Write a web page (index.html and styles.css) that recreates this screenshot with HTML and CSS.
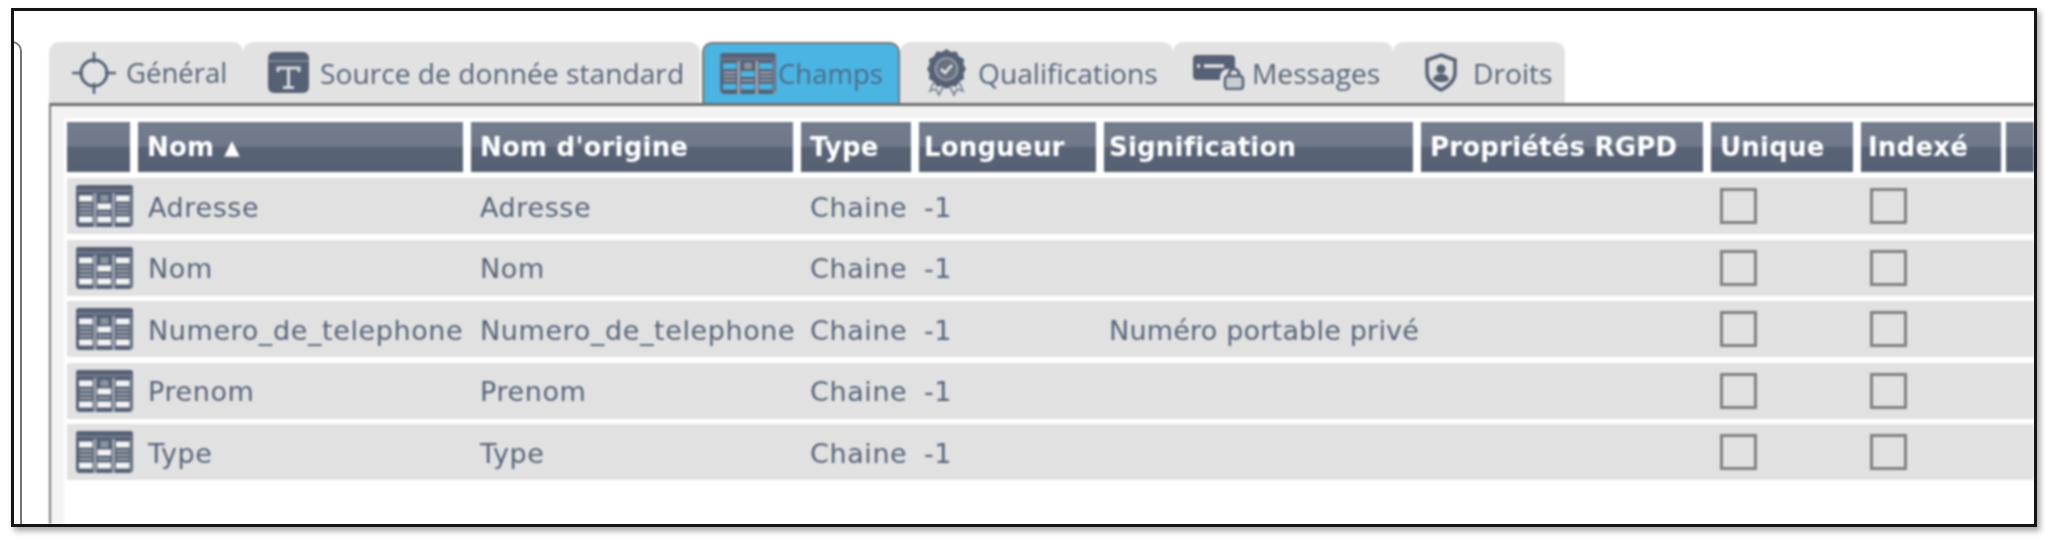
FILE: index.html
```html
<!DOCTYPE html>
<html lang="fr">
<head>
<meta charset="utf-8">
<title>Champs</title>
<link rel="stylesheet" href="styles.css">
</head>
<body>
<svg class="defs" width="0" height="0" aria-hidden="true">
  <symbol id="i-table" viewBox="0 0 57 42">
    <rect width="57" height="42" rx="3" fill="#9ca3af"/>
    <path d="M3 0h51a3 3 0 0 1 3 3v5H0V3a3 3 0 0 1 3-3z" fill="#566175"/>
    <path d="M0 5h57v1H0z" fill="#8b93a1"/>
    <path d="M0 8h2.500v33H3a3 3 0 0 1-3-3zM57 8h-1.500v33H54a3 3 0 0 0 3-3z" fill="#566175"/>
    <rect x="2" y="8" width="15.500" height="34" fill="#566175"/>
    <rect x="20.500" y="8" width="15.500" height="34" fill="#566175"/>
    <rect x="39" y="8" width="15.500" height="34" fill="#566175"/>
    <rect x="3" y="10.500" width="13.500" height="6" fill="currentColor"/>
    <rect x="40" y="10.500" width="13.500" height="6" fill="currentColor"/>
    <rect x="21.500" y="18.500" width="13.500" height="6" fill="currentColor"/>
    <rect x="3" y="31.500" width="13.500" height="6" fill="currentColor"/>
    <rect x="21.500" y="31.500" width="13.500" height="6" fill="currentColor"/>
    <rect x="40" y="31.500" width="13.500" height="6" fill="currentColor"/>
    <path d="M3.500 20h12.500M3.500 24h12.500M3.500 28h12.500M40.500 20h12.500M40.500 24h12.500M40.500 28h12.500M22 28h12.500" stroke="#b4b9c2" stroke-width="1.400"/>
    <rect x="24.500" y="10" width="8" height="6.500" fill="#8b93a1"/>
  </symbol>
</svg>
<div class="frame">
  <div class="side"></div>
  <div class="main">
    <div class="tabs">
      <div class="tab tab-general">
        <svg class="ic ic-cross" viewBox="0 0 44 42"><circle cx="22" cy="21" r="13" fill="none" stroke="#556074" stroke-width="3"/><path d="M22 0v11M22 31v11M0 21h11M33 21h11" stroke="#556074" stroke-width="2.500"/></svg>
        <span>Général</span>
      </div>
      <div class="tab tab-source">
        <svg class="ic ic-t" viewBox="0 0 41 41"><rect width="41" height="41" rx="6" fill="#566175"/><path d="M0 9h41" stroke="#8b93a1" stroke-width="1.500"/><path d="M10 20v-4h21v4M20.500 16v19M15 35.500h11" fill="none" stroke="#d5d8dd" stroke-width="3"/></svg>
        <span>Source de donnée standard</span>
      </div>
      <div class="tab tab-champs">
        <svg class="ic ic-tbl-tab"><use href="#i-table"/></svg>
        <span>Champs</span>
      </div>
      <div class="tab tab-qual">
        <svg class="ic ic-rosette" viewBox="0 0 39 48"><path d="M10 26 3 42l6-2 3 6 6-12M29 26l7 16-6-2-3 6-6-12" fill="none" stroke="#7d8694" stroke-width="1.800"/><path d="M19.500 0l4.500 3 5.500-.5 2.500 5 5 2.500-.5 5.500 2.500 4.500-2.500 4.500.5 5.500-5 2.500-2.500 5-5.500-.5-4.500 3-4.500-3-5.500.5-2.500-5-5-2.500.5-5.500L0 20l2.500-4.500L2 10l5-2.500L9.500 2.500 15 3z" fill="#566175"/><circle cx="19.500" cy="20" r="11" fill="#69727f" stroke="#a3a9b3" stroke-width="1.500"/><path d="M14 20l4 4 7-8" fill="none" stroke="#eceded" stroke-width="2.500"/></svg>
        <span>Qualifications</span>
      </div>
      <div class="tab tab-msg">
        <svg class="ic ic-msg" viewBox="0 0 52 35"><path d="M4 0h34a4 4 0 0 1 4 4v10h-8a8 8 0 0 0-7 8v3H4a4 4 0 0 1-4-4V4a4 4 0 0 1 4-4z" fill="#566175"/><path d="M4 11h3M11 11h20" stroke="#e3e3e3" stroke-width="3.500"/><path d="M36 22v-3a5 5 0 0 1 10 0v3" fill="none" stroke="#566175" stroke-width="3"/><rect x="32" y="21" width="18" height="13" rx="3" fill="#c9ccd1" stroke="#566175" stroke-width="2.500"/></svg>
        <span>Messages</span>
      </div>
      <div class="tab tab-droits">
        <svg class="ic ic-shield" viewBox="0 0 34 39"><path d="M17 2 31 7v13c0 8-6 13-14 17C9 33 3 28 3 20V7z" fill="none" stroke="#566175" stroke-width="3.500"/><circle cx="17" cy="16" r="4.500" fill="#566175"/><path d="M9 27c1-5 4-6 8-6s7 1 8 6c-4 3-12 3-16 0z" fill="#566175"/></svg>
        <span>Droits</span>
      </div>
    </div>
    <div class="panel">
      <div class="inner">
        <div class="grid head">
          <div class="th"></div>
          <div class="th pad">Nom <span class="sort">▲</span></div>
          <div class="th pad">Nom d'origine</div>
          <div class="th pad">Type</div>
          <div class="th pad-s">Longueur</div>
          <div class="th pad-s">Signification</div>
          <div class="th pad">Propriétés RGPD</div>
          <div class="th pad">Unique</div>
          <div class="th pad-m">Indexé</div>
          <div class="th last"></div>
        </div>
        <div class="grid row">
          <div class="td-ic"><svg class="ic ic-tbl"><use href="#i-table"/></svg></div>
          <div class="td pad">Adresse</div>
          <div class="td pad">Adresse</div>
          <div class="td pad">Chaine</div>
          <div class="td pad-s">-1</div>
          <div class="td pad-s"></div>
          <div class="td"></div>
          <div class="td pad"><span class="check"></span></div>
          <div class="td pad"><span class="check"></span></div>
          <div class="td"></div>
        </div>
        <div class="grid row">
          <div class="td-ic"><svg class="ic ic-tbl"><use href="#i-table"/></svg></div>
          <div class="td pad">Nom</div>
          <div class="td pad">Nom</div>
          <div class="td pad">Chaine</div>
          <div class="td pad-s">-1</div>
          <div class="td pad-s"></div>
          <div class="td"></div>
          <div class="td pad"><span class="check"></span></div>
          <div class="td pad"><span class="check"></span></div>
          <div class="td"></div>
        </div>
        <div class="grid row">
          <div class="td-ic"><svg class="ic ic-tbl"><use href="#i-table"/></svg></div>
          <div class="td pad">Numero_de_telephone</div>
          <div class="td pad">Numero_de_telephone</div>
          <div class="td pad">Chaine</div>
          <div class="td pad-s">-1</div>
          <div class="td pad-s tight">Numéro portable privé</div>
          <div class="td"></div>
          <div class="td pad"><span class="check"></span></div>
          <div class="td pad"><span class="check"></span></div>
          <div class="td"></div>
        </div>
        <div class="grid row">
          <div class="td-ic"><svg class="ic ic-tbl"><use href="#i-table"/></svg></div>
          <div class="td pad">Prenom</div>
          <div class="td pad">Prenom</div>
          <div class="td pad">Chaine</div>
          <div class="td pad-s">-1</div>
          <div class="td pad-s"></div>
          <div class="td"></div>
          <div class="td pad"><span class="check"></span></div>
          <div class="td pad"><span class="check"></span></div>
          <div class="td"></div>
        </div>
        <div class="grid row">
          <div class="td-ic"><svg class="ic ic-tbl"><use href="#i-table"/></svg></div>
          <div class="td pad">Type</div>
          <div class="td pad">Type</div>
          <div class="td pad">Chaine</div>
          <div class="td pad-s">-1</div>
          <div class="td pad-s"></div>
          <div class="td"></div>
          <div class="td pad"><span class="check"></span></div>
          <div class="td pad"><span class="check"></span></div>
          <div class="td"></div>
        </div>
      </div>
    </div>
  </div>
</div>
</body>
</html>
```
FILE: styles.css
```css
* { box-sizing: border-box; }
html, body { margin: 0; padding: 0; background: #fff; }
body { width: 2045px; height: 540px; overflow: hidden; padding: 8px 8px 0 11px; }
.defs { display: block; height: 0; }

.frame {
  width: 2026px;
  height: 519px;
  border: 3px solid #141414;
  box-shadow: 3px 4px 6px rgba(0, 0, 0, .35);
  background: #fff;
  display: flex;
  overflow: hidden;
}
.side {
  flex: none;
  width: 10px;
  margin-top: 30px;
  margin-left: -2px;
  border-top: 2px solid #777;
  border-right: 2px solid #777;
  border-top-right-radius: 12px;
  filter: blur(.5px);
}
.main {
  flex: 1;
  min-width: 0;
  padding: 31px 0 0 27px;
  display: flex;
  flex-direction: column;
  filter: blur(.85px);
}

/* tabs */
.tabs { display: flex; height: 61px; flex: none; }
.tab {
  height: 61px;
  display: flex;
  align-items: center;
  background: #e2e2e2;
  border-radius: 10px 10px 0 0;
  font: 400 28.200px "Open Sans", "Liberation Sans", sans-serif;
  color: #566479;
  white-space: nowrap;
  flex: none;
}
.tab-general { width: 194px; padding-left: 23px; gap: 10px; font-size: 27.500px; }
.tab-source { width: 457px; padding-left: 25px; gap: 11px; margin-right: 2px; }
.tab-champs {
  width: 198px;
  padding-left: 15px;
  gap: 1px;
  background: #4ab5e3;
  border: 2px solid #777;
  border-bottom: 0;
  color: #4f6a87;
  font-size: 27.500px;
}
.tab-qual { width: 273px; padding-left: 27px; gap: 12px; }
.tab-msg { width: 220px; padding-left: 20px; gap: 7px; }
.tab-droits { width: 172px; padding-left: 31px; gap: 15px; }

.ic { display: block; flex: none; }
.ic-cross { width: 44px; height: 42px; }
.ic-t { width: 41px; height: 41px; }
.ic-tbl-tab { width: 58px; height: 41px; color: #4ab5e3; }
.ic-rosette { width: 39px; height: 48px; }
.ic-msg { width: 52px; height: 35px; }
.ic-shield { width: 34px; height: 39px; }
.ic-tbl { width: 57px; height: 42px; color: #f4f4f4; }

/* panel */
.panel {
  flex: 1;
  border-top: 3px solid #6e6e6e;
  border-left: 2px solid #777;
  background: #fff;
  min-height: 0;
}
.inner {
  height: 100%;
  border-top: 12px solid #f3f3f3;
  border-left: 13px solid #f3f3f3;
  padding: 4px 0 0 3px;
  display: flex;
  flex-direction: column;
  gap: 5.500px;
}
.grid {
  display: grid;
  grid-template-columns: 63px 325px 322px 110px 177px 309px 282px 142px 140px 1fr;
  column-gap: 8px;
  flex: none;
}
.head { height: 50px; margin-bottom: .500px; }
.th {
  background: linear-gradient(#737d8e 0, #6f798a 50%, #586375 50%, #566174 100%);
  color: #fff;
  font: 700 26px "DejaVu Sans", "Liberation Sans", sans-serif;
  letter-spacing: .2px;
  display: flex;
  align-items: center;
  white-space: nowrap;
  min-width: 0;
}
.last { margin-left: -3px; }
.sort { font-size: 20px; margin-left: 10px; }
.pad { padding-left: 9px; }
.pad-s { padding-left: 5px; }
.pad-m { padding-left: 7px; }

.row { height: 56px; background: #e1e1e1; }
.td {
  display: flex;
  align-items: center;
  padding-top: 2px;
  font: 400 27px "DejaVu Sans", "Liberation Sans", sans-serif;
  letter-spacing: .6px;
  color: #566479;
  white-space: nowrap;
  min-width: 0;
}
.td.tight { letter-spacing: .2px; }
.td.pad:nth-child(2) { padding-left: 10px; }
.td-ic { display: flex; align-items: center; padding-left: 9px; }
.check {
  display: block;
  width: 37px;
  height: 36px;
  margin-top: -2px;
  border: 3px solid #808080;
}
```
